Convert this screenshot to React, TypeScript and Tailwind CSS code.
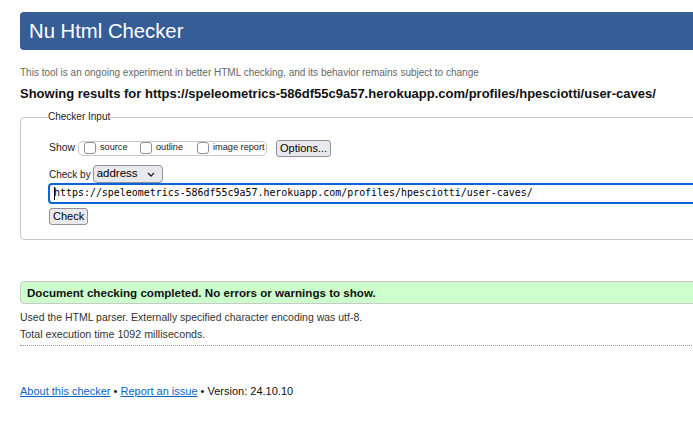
const sans = "font-['Liberation_Sans',Arial,sans-serif]";

function Box({ label, width }: { label: string; width: string }) {
  return (
    <label className={`flex shrink-0 items-center gap-[4px] whitespace-nowrap ${width}`}>
      <span className="inline-block size-[12px] shrink-0 rounded-[3px] border border-[#8f8f9d] bg-white" />
      <span className="text-[9.2px] leading-none text-[#222]">{label}</span>
    </label>
  );
}

function Btn({ children }: { children: React.ReactNode }) {
  return (
    <button className="flex h-[17px] items-center whitespace-nowrap rounded-[3px] border border-[#8f8f9d] bg-[#e9e9ed] px-[3px] text-[11px] leading-none text-black">
      {children}
    </button>
  );
}

export default function App() {
  const url = "https://speleometrics-586df55c9a57.herokuapp.com/profiles/hpesciotti/user-caves/";
  return (
    <div className="h-[424px] w-[693px] overflow-hidden bg-white">
      <div className={`w-[1000px] pl-5 pt-3 ${sans}`}>
        <header className="flex h-[38px] items-center rounded-[4px] bg-[#365d95] pl-[9px] text-[20.3px] text-white">
          Nu Html Checker
        </header>

        <p className="mt-[16px] whitespace-nowrap text-[10px] leading-[14px] text-[#666]">
          This tool is an ongoing experiment in better HTML checking, and its behavior remains subject to change
        </p>
        <h2 className="mt-[5px] whitespace-nowrap text-[13px] font-bold leading-[18px] text-[#111]">
          Showing results for {url}
        </h2>

        <fieldset className="mt-[7px] w-[900px] rounded-[4px] border border-[#c8c8c8] pb-[14px] pl-[28px]">
          <legend className="-ml-px text-[10px] leading-[14px] text-[#222]">Checker Input</legend>

          <div className="mt-[16px] flex h-[16px] items-center">
            <span className="w-[29px] text-[10.4px] text-[#222]">Show</span>
            <div className="flex h-[15px] w-[189px] items-center rounded-[5px] border border-[#c8c8c8] pl-[5px]">
              <Box label="source" width="w-[56px]" />
              <Box label="outline" width="w-[57px]" />
              <Box label="image report" width="w-auto" />
            </div>
            <div className="ml-[9px]">
              <Btn>Options...</Btn>
            </div>
          </div>

          <div className="mt-[9px] flex h-[18px] items-center gap-[2px]">
            <span className="text-[10px] text-[#222]">Check by</span>
            <div className="flex h-[18px] w-[70px] items-center justify-between rounded-[4px] border border-[#8f8f9d] bg-[#e9e9ed] pl-[3px] pr-[7px] text-[11.5px] leading-none text-black">
              address
              <svg width="8" height="5" viewBox="0 0 8 5" fill="none" stroke="#222" strokeWidth="1.3">
                <path d="M1 1l3 3 3-3" />
              </svg>
            </div>
          </div>

          <div className="-ml-px flex h-[21px] items-center rounded-l-[4px] border-2 border-[#0b63d8] pl-[4px] font-['DejaVu_Sans_Mono',monospace] text-[9.95px] text-[#000]">
            <span className="-mr-px inline-block h-[13px] w-px bg-black" />
            {url}
          </div>

          <div className="mt-[4px] flex">
            <Btn>Check</Btn>
          </div>
        </fieldset>

        <div className="mt-[41px] flex h-[23px] items-center rounded-l-[4px] border border-[#c8c8c8] bg-[#ccffcc] pl-[6px] text-[11.6px] font-bold text-[#111]">
          Document checking completed. No errors or warnings to show.
        </div>

        <p className="mt-[6px] text-[10.5px] leading-[14px] text-[#333]">
          Used the HTML parser. Externally specified character encoding was utf-8.
        </p>
        <p className="mt-[3px] text-[10.7px] leading-[14px] text-[#333]">Total execution time 1092 milliseconds.</p>
        <div className="mt-[4px] border-t border-dotted border-[#999]" />

        <p className="mt-[38px] text-[11px] leading-[14px] text-[#111]">
          <a className="text-[#0b63c4] underline">About this checker</a> •{" "}
          <a className="text-[#0b63c4] underline">Report an issue</a> • Version: 24.10.10
        </p>
      </div>
    </div>
  );
}
